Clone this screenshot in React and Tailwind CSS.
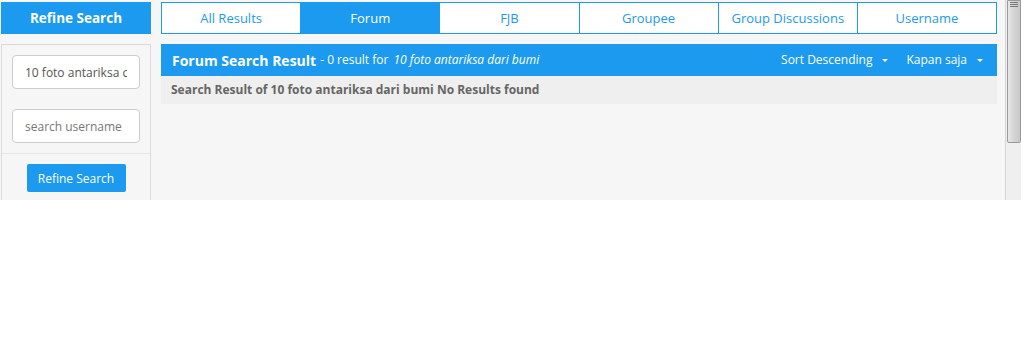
import React from "react";

const Caret = () => (
  <span className="inline-block ml-[10px] w-0 h-0 border-l-[3px] border-r-[3px] border-t-[3px] border-l-transparent border-r-transparent border-t-white align-middle" />
);

export default function App() {
  const tabs = ["All Results", "Forum", "FJB", "Groupee", "Group Discussions", "Username"];
  return (
    <div className="w-[1021px] h-[360px] bg-white" style={{ fontFamily: '"Open Sans", "Noto Sans", sans-serif' }}>
      <div className="flex h-[200px]">
        <div className="w-[1005px] h-[200px] bg-[#f6f6f6] overflow-hidden flex gap-[10px] pl-[1px] pt-[2px]">
          {/* left column */}
          <div className="w-[150px] flex flex-col gap-[10px] shrink-0">
            <div className="h-[32px] bg-[#1b9aef] text-white font-bold text-[13.5px] flex items-center justify-center pt-[1px]">
              Refine Search
            </div>
            <div className="flex-1 border border-[#d9d9d9] border-b-0 bg-[#f6f6f6] flex flex-col">
              <div className="px-[10px] pt-[10px] pb-[10px] flex flex-col gap-[20px] border-b border-[#e6e6e6]">
                <div className="h-[34px] bg-white border border-[#cccccc] rounded-[4px] pl-[12px] pr-[12px] pt-[2px] flex items-center text-[12px] text-[#555]">
                  <span className="block overflow-hidden whitespace-nowrap w-full">10 foto antariksa c</span>
                </div>
                <div className="h-[34px] bg-white border border-[#cccccc] rounded-[4px] pl-[12px] pt-[2px] flex items-center text-[12px] text-[#777] overflow-hidden whitespace-nowrap">
                  search username
                </div>
              </div>
              <div className="flex justify-center pt-[10px]">
                <button className="w-[99px] h-[28px] bg-[#1b9aef] text-white text-[12px] rounded-[2px] flex items-center justify-center pt-[1px]">
                  Refine Search
                </button>
              </div>
            </div>
          </div>
          {/* right column */}
          <div className="w-[836px] flex flex-col gap-[10px] shrink-0">
            <div className="h-[32px] flex border border-[#1b9aef] bg-white">
              {tabs.map((t, i) => (
                <div
                  key={t}
                  className={
                    "flex-1 flex items-center justify-center text-[13px] pt-[1px] " +
                    (i > 0 ? "border-l border-[#1b9aef] " : "") +
                    (t === "Forum" ? "bg-[#1b9aef] text-white" : "text-[#1b9aef]")
                  }
                >
                  {t}
                </div>
              ))}
            </div>
            <div className="flex flex-col">
              <div className="h-[32px] bg-[#1b9aef] text-white flex items-center pl-[11px] pr-[14px]">
                <span className="font-bold text-[14px]">Forum Search Result</span>
                <span className="text-[12px] ml-[4px]">- 0 result for</span>
                <span className="text-[12px] italic ml-[5px]">10 foto antariksa dari bumi</span>
                <div className="ml-auto flex items-center text-[12px]">
                  <span>Sort Descending</span>
                  <Caret />
                  <span className="ml-[18px]">Kapan saja</span>
                  <Caret />
                </div>
              </div>
              <div className="h-[28px] bg-[#efefef] flex items-center pl-[10px] text-[12px] font-bold text-[#666]">
                Search Result of 10 foto antariksa dari bumi No Results found
              </div>
            </div>
          </div>
        </div>
        {/* scrollbar */}
        <div className="w-[16px] h-[200px] bg-[#efefef] border-l border-[#d6d6d6] relative">
          <div className="absolute left-[1px] right-[0px] top-0 h-[143px] border border-[#9a9a9a] rounded-b-[2px] bg-gradient-to-r from-[#e8e8e8] via-[#d4d4d4] to-[#c8c8c8]">
            <div className="mt-[1px] mx-[2px] flex flex-col gap-[1px]">
              <div className="h-[1px] bg-[#777]" />
              <div className="h-[1px] bg-[#777]" />
              <div className="h-[1px] bg-[#777]" />
            </div>
          </div>
        </div>
      </div>
    </div>
  );
}
